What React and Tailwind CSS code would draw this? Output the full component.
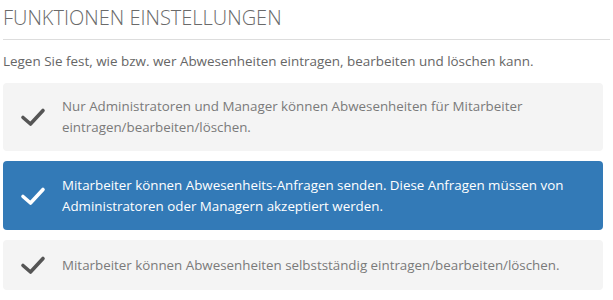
import React from "react";

function Check({ color }) {
  return (
    <svg width="26" height="20" viewBox="0 0 26 20" className="shrink-0">
      <polyline
        points="3,10.5 10.5,17 23,3.5"
        fill="none"
        stroke={color}
        strokeWidth="3.6"
        strokeLinecap="round"
        strokeLinejoin="round"
      />
    </svg>
  );
}

function Option({ active, children }) {
  return (
    <div
      className={
        "flex items-center rounded-[4px] pl-[17px] pr-4 " +
        (active ? "bg-[#337ab7] text-white" : "bg-[#f4f4f4] text-[#7a7a7a]")
      }
    >
      <Check color={active ? "#ffffff" : "#555555"} />
      <div className="ml-[16px] text-[13.35px] leading-[21px]">{children}</div>
    </div>
  );
}

export default function App() {
  return (
    <div
      className="w-[613px] h-[300px] bg-white pl-[3px] pr-[10px] overflow-hidden"
      style={{ fontFamily: '"Open Sans", sans-serif' }}
    >
      <div className="pt-[5px] text-[20px] font-light leading-[26px] text-[#6a6a6a] tracking-[0px]">
        FUNKTIONEN EINSTELLUNGEN
      </div>
      <div className="mt-[8px] h-px bg-[#dddddd] mr-[-7px]" />
      <div className="mt-[11px] text-[13.45px] leading-[20px] text-[#666]">
        Legen Sie fest, wie bzw. wer Abwesenheiten eintragen, bearbeiten und löschen kann.
      </div>
      <div className="mt-[12px] flex flex-col gap-[10px]">
        <div className="[&>div]:h-[68px]">
          <Option>
            Nur Administratoren und Manager können Abwesenheiten für Mitarbeiter
            <br />
            eintragen/bearbeiten/löschen.
          </Option>
        </div>
        <div className="[&>div]:h-[69px]">
          <Option active>
            Mitarbeiter können Abwesenheits-Anfragen senden. Diese Anfragen müssen von
            <br />
            Administratoren oder Managern akzeptiert werden.
          </Option>
        </div>
        <div className="[&>div]:h-[50px]">
          <Option>
            Mitarbeiter können Abwesenheiten selbstständig eintragen/bearbeiten/löschen.
          </Option>
        </div>
      </div>
    </div>
  );
}
